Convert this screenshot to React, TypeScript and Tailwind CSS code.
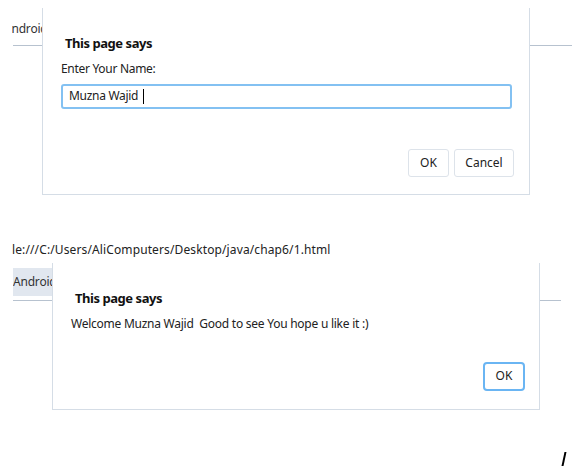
import React from 'react';

const font = { fontFamily: '"Noto Sans", "Open Sans", sans-serif' };

function PromptDialog() {
  return (
    <div className="absolute left-[42px] top-[8px] w-[488px] h-[187px] bg-white border border-t-0 border-[#d5dde6]">
      <div className="pl-[22px] pt-[26px] text-[13px] font-bold text-[#111] tracking-[-0.45px]">This page says</div>
      <div className="pl-[18px] pt-[6px] text-[12px] text-[#222] tracking-[-0.3px]">Enter Your Name:</div>
      <div className="ml-[18px] mt-[6px] w-[451px] h-[25px] rounded-[3px] border-2 border-[#83c1f2] flex items-center pl-[6px] text-[12px] text-[#222] tracking-[-0.3px]">
        Muzna Wajid
        <span className="ml-[5px] inline-block w-px h-[15px] bg-black" />
      </div>
      <div className="flex justify-end gap-[5px] pr-[15px] pt-[40px]">
        <button className="w-[41px] h-[28px] rounded-[3px] border border-[#dde3ea] text-[12px] text-[#222] bg-white">OK</button>
        <button className="w-[60px] h-[28px] rounded-[3px] border border-[#dde3ea] text-[12px] text-[#222] bg-white">Cancel</button>
      </div>
    </div>
  );
}

function AlertDialog() {
  return (
    <div className="absolute left-[52px] top-[33px] w-[488px] h-[147px] bg-white border border-t-0 border-[#d5dde6]">
      <div className="pl-[22px] pt-[26px] text-[13px] font-bold text-[#111] tracking-[-0.45px]">This page says</div>
      <div className="pl-[18px] pt-[6px] text-[12px] text-[#222] whitespace-pre tracking-[-0.25px]">
        {'Welcome Muzna Wajid  Good to see You hope u like it :)'}
      </div>
      <div className="flex justify-end pr-[14px] pt-[29px]">
        <button className="w-[42px] h-[29px] rounded-[4px] border-2 border-[#6ab5f3] text-[12px] text-[#222] bg-white">OK</button>
      </div>
    </div>
  );
}

export default function App() {
  return (
    <div className="w-[585px] h-[474px] bg-white relative overflow-hidden" style={font}>
      {/* first capture: prompt */}
      <div className="relative h-[230px]">
        <div className="h-[45px] flex items-end pb-[7px]">
          <div className="ml-[12px] w-[30px] overflow-hidden whitespace-nowrap text-[12px] text-[#333] tracking-[-0.2px]">
            <span className="-ml-[8px]">Android</span>
          </div>
        </div>
        <div className="ml-[13px] w-[559px] h-px bg-[#b7c2cf]" />
        <PromptDialog />
      </div>

      {/* second capture: alert */}
      <div className="relative h-[244px]">
        <div className="pt-[11px] pl-[12px] text-[12px] text-[#222] whitespace-nowrap tracking-[0.12px]">
          le:///C:/Users/AliComputers/Desktop/java/chap6/1.html
        </div>
        <div className="mt-[9px] ml-[13px] w-[39px] h-[28px] bg-[#e1e7ef] overflow-hidden whitespace-nowrap flex items-center text-[12px] text-[#333] tracking-[-0.2px]">
          Android
        </div>
        <div className="mt-[4px] ml-[13px] w-[548px] h-px bg-[#b7c2cf]" />
        <AlertDialog />
        <div className="absolute left-[563px] top-[222px] w-[2px] h-[14px] bg-black skew-x-[-12deg]" />
      </div>
    </div>
  );
}
